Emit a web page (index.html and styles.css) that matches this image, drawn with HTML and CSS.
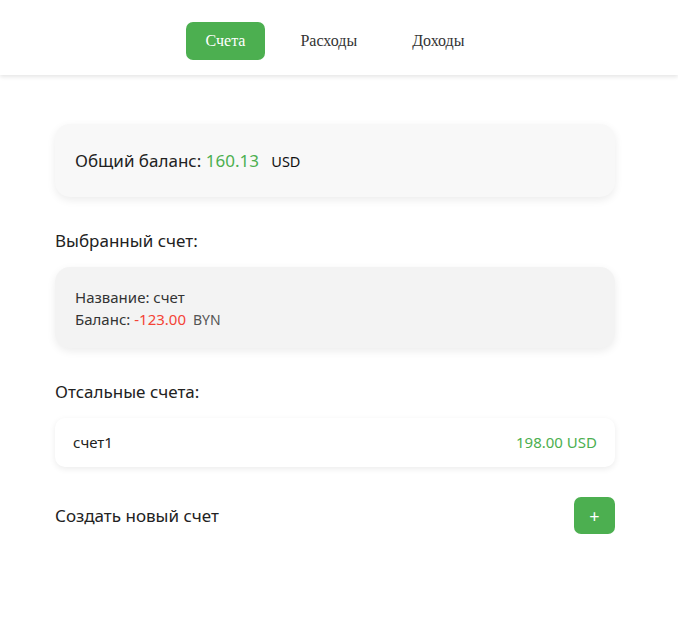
FILE: index.html
```html
<!DOCTYPE html>
<html lang="ru">
<head>
<meta charset="utf-8">
<title>Счета</title>
<link rel="stylesheet" href="styles.css">
</head>
<body>
<header class="header">
  <nav class="nav">
    <a class="nav-btn active" href="#">Счета</a>
    <a class="nav-btn" href="#">Расходы</a>
    <a class="nav-btn" href="#">Доходы</a>
  </nav>
</header>
<main class="main">
  <section class="total-card">
    <span class="total-label">Общий баланс:</span>
    <span class="total-value">160.13</span>
    <span class="total-cur">USD</span>
  </section>

  <h2 class="section-title">Выбранный счет:</h2>
  <section class="selected-card">
    <div class="line">Название: счет</div>
    <div class="line">Баланс: <span class="neg">-123.00</span> <span class="cur">BYN</span></div>
  </section>

  <h2 class="section-title">Отсальные счета:</h2>
  <div class="account-item">
    <span class="acc-name">счет1</span>
    <span class="acc-value">198.00 USD</span>
  </div>

  <div class="create-row">
    <span class="create-label">Создать новый счет</span>
    <button class="add-btn" type="button">+</button>
  </div>
</main>
</body>
</html>
```

FILE: styles.css
```css
html, body {
  margin: 0;
  padding: 0;
  background: #ffffff;
}
body {
  font-family: "Noto Sans", "Open Sans", sans-serif;
  color: #222;
}
.header {
  height: 75px;
  display: flex;
  align-items: center;
  justify-content: center;
  background: #fff;
  box-shadow: 0 2px 4px rgba(0,0,0,0.1);
}
.nav {
  display: flex;
  gap: 15px;
  margin-left: -8px;
  margin-top: 6px;
}
.nav-btn {
  font-family: "Liberation Serif", serif;
  font-size: 16px;
  line-height: 18px;
  padding: 10px 20px;
  border-radius: 7px;
  color: #333;
  text-decoration: none;
}
.nav-btn.active {
  background: #4caf50;
  color: #fff;
}
.main {
  width: 560px;
  margin: 49px 0 0 55px;
}
.total-card {
  background: #f8f8f8;
  border-radius: 15px;
  box-shadow: 0 3px 8px rgba(0,0,0,0.08);
  padding: 25px 20px 24px;
  font-size: 17px;
  line-height: 24px;
}
.total-value {
  color: #4caf50;
}
.total-cur {
  font-size: 14.5px;
  margin-left: 8px;
  color: #111;
}
.section-title {
  font-size: 17px;
  font-weight: 400;
  line-height: 24px;
  margin: 32px 0 14px;
  color: #222;
}
.selected-card {
  background: #f3f3f3;
  border-radius: 15px;
  box-shadow: 0 3px 8px rgba(0,0,0,0.08);
  padding: 19px 20px 17px;
  font-size: 15px;
  line-height: 22px;
  color: #333;
}
.neg {
  color: #f44336;
}
.cur {
  font-size: 14px;
  color: #555;
  margin-left: 3px;
}
.account-item {
  display: flex;
  justify-content: space-between;
  align-items: center;
  background: #fff;
  border-radius: 10px;
  box-shadow: 0 2px 6px rgba(0,0,0,0.08);
  padding: 13px 18px 14px;
  font-size: 15px;
  line-height: 22px;
}
.acc-value {
  color: #4caf50;
}
.create-row {
  display: flex;
  justify-content: space-between;
  align-items: center;
  margin-top: 30px;
}
.create-label {
  font-size: 17px;
  line-height: 24px;
}
.add-btn {
  width: 41px;
  height: 37px;
  border: none;
  border-radius: 7px;
  background: #4caf50;
  color: #fff;
  font-family: "Noto Sans", sans-serif;
  font-size: 18px;
  line-height: 1;
  padding: 0;
}
```
